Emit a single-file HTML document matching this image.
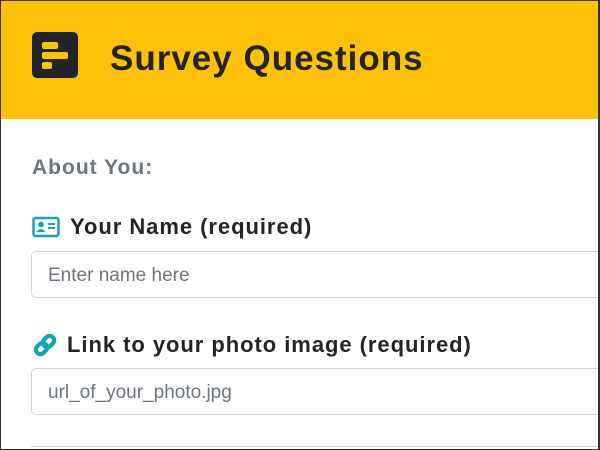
<!DOCTYPE html>
<html><head><style>
html,body{margin:0;padding:0;}
body{width:600px;height:450px;overflow:hidden;position:relative;font-family:"Liberation Sans",sans-serif;background:#fff;}
.frame{position:absolute;left:0;top:0;width:597px;height:448px;border:1px solid #333;border-right-width:2px;box-sizing:content-box;}
.hdr{position:absolute;left:1px;top:1px;width:597px;height:118px;background:#ffc107;}
.logo{position:absolute;left:31px;top:31px;width:46px;height:46px;background:#212529;border-radius:5px;}
.logo i{position:absolute;background:#ffc107;border-radius:2px;height:7px;left:10px;}
.title{position:absolute;left:109px;top:38px;font-size:35px;font-weight:bold;color:#212529;letter-spacing:1px;}
.sec{position:absolute;left:32px;top:156px;font-size:21px;font-weight:bold;color:#6c757d;letter-spacing:1px;}
.lbl{position:absolute;left:32px;font-size:22px;font-weight:bold;color:#212529;display:flex;align-items:center;letter-spacing:0.95px;}
.inp{position:absolute;left:31px;width:600px;height:47px;border:1px solid #ced4da;border-radius:5px;box-sizing:border-box;font-size:19px;color:#6c757d;padding:13px 16px;}
</style></head><body>
<div class="hdr">
<div class="logo"><i style="top:10px;width:16px"></i><i style="top:20px;width:26px"></i><i style="top:30px;width:10px"></i></div>
<div class="title">Survey Questions</div>
</div>
<div class="sec">About You:</div>
<div class="lbl" style="top:214px">
<svg width="28" height="22" viewBox="0 0 28 22" style="margin-right:10px"><rect x="1.5" y="2" width="25" height="18" rx="2" fill="none" stroke="#17a2b8" stroke-width="2.5"/><circle cx="9" cy="8.5" r="2.8" fill="#17a2b8"/><path d="M4.5 16 q4.5-6 9 0z" fill="#17a2b8"/><rect x="16" y="7" width="7" height="2" fill="#17a2b8"/><rect x="16" y="11" width="7" height="2" fill="#17a2b8"/></svg>Your Name (required)</div>
<div class="inp" style="top:251px">Enter name here</div>
<div class="lbl" style="top:332px">
<svg width="26" height="26" viewBox="0 0 26 26" style="margin-right:9px"><g fill="none" stroke="#17a2b8" stroke-width="4.2" stroke-linecap="round"><g transform="rotate(-45 13 13)"><rect x="2" y="8.5" width="12" height="9" rx="4.5"/><rect x="12" y="8.5" width="12" height="9" rx="4.5"/></g></g></svg>Link to your photo image (required)</div>
<div class="inp" style="top:368px">url_of_your_photo.jpg</div>
<div style="position:absolute;left:31px;top:446px;width:570px;height:1px;background:#ced4da"></div>
<div class="frame"></div>
</body></html>
